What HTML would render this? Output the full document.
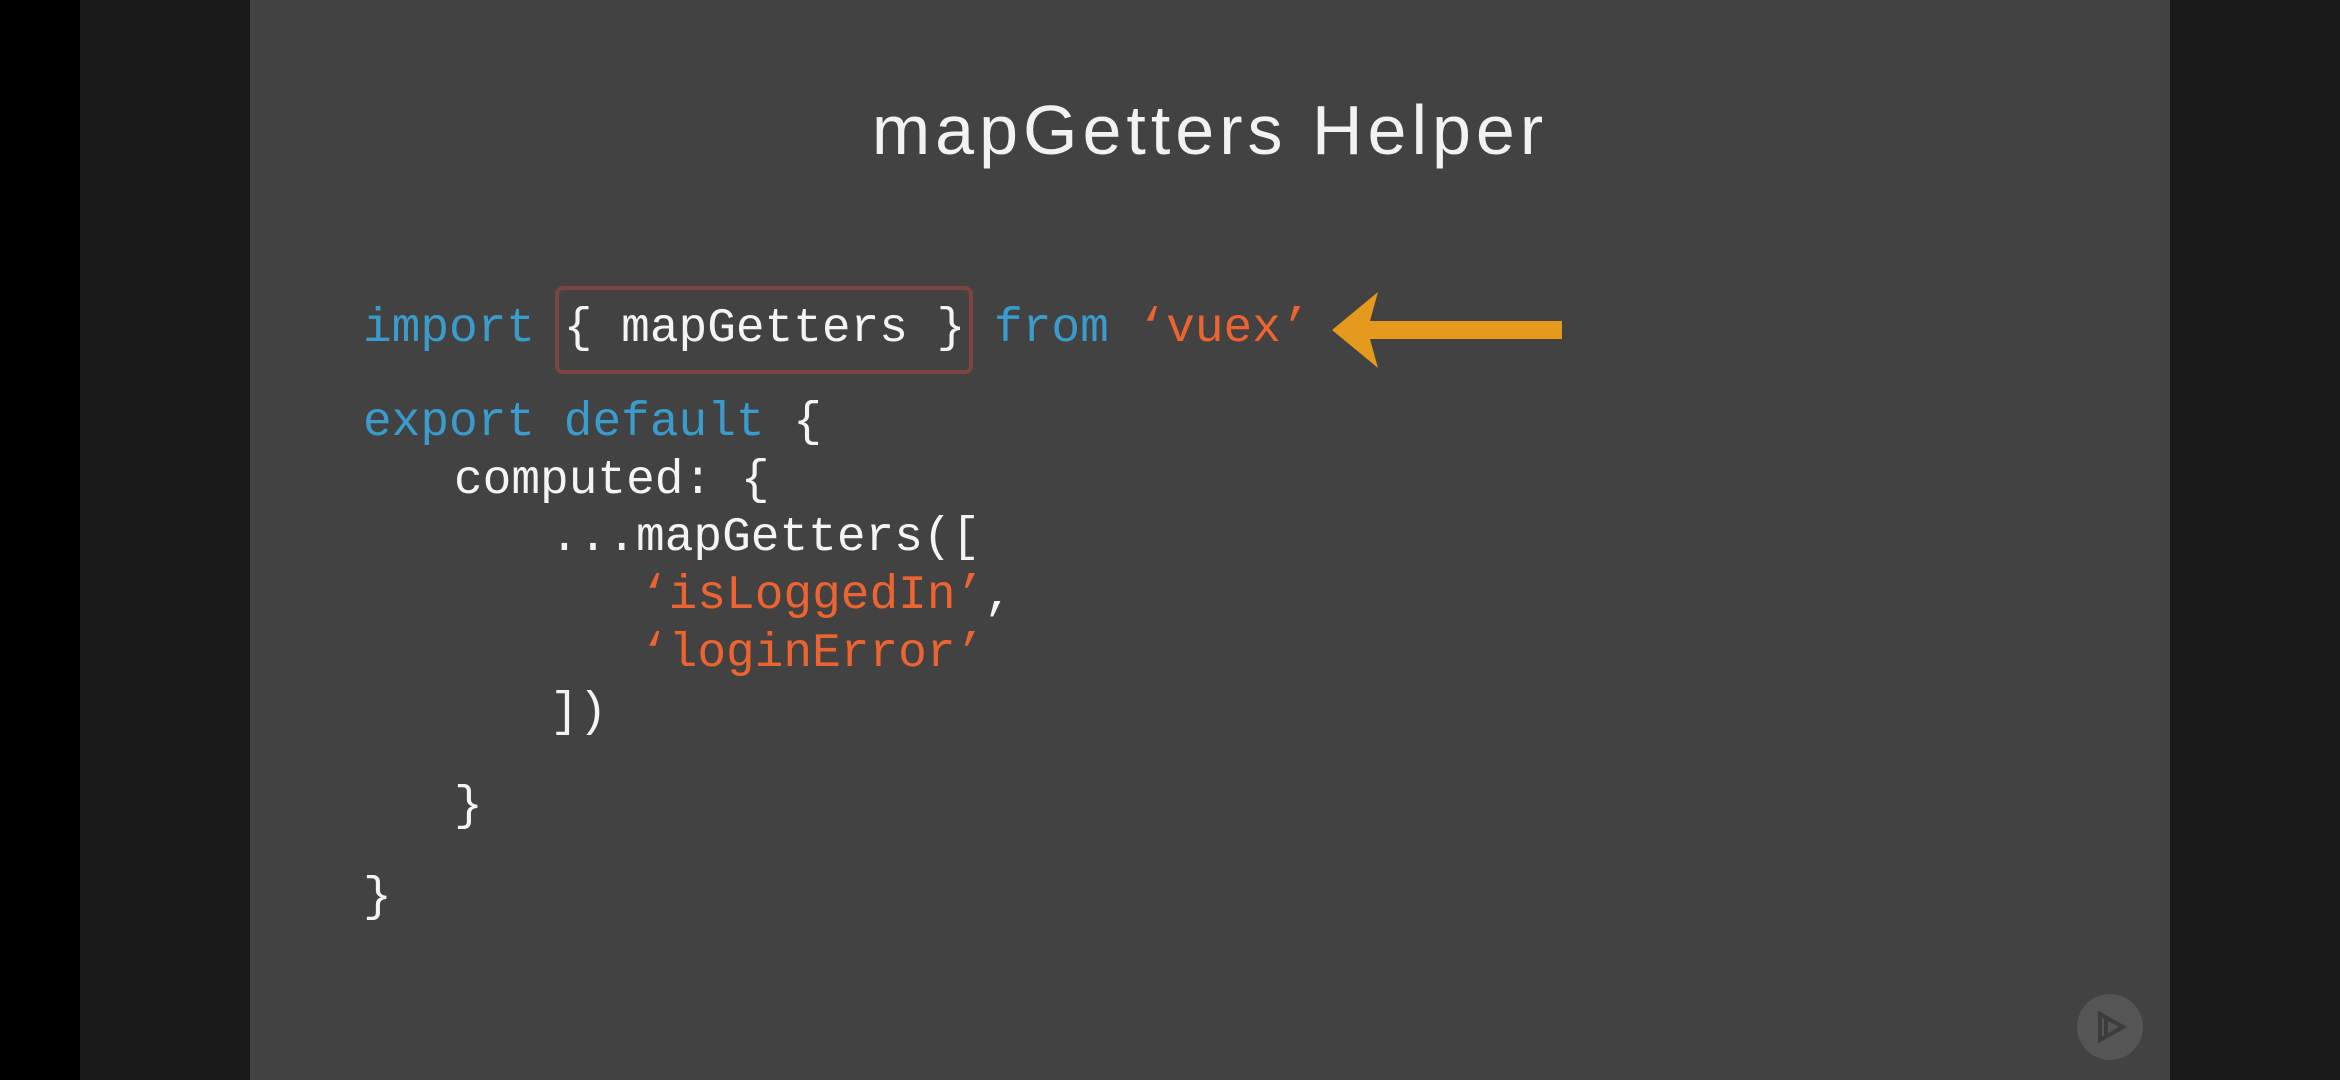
<!DOCTYPE html>
<html><head><meta charset="utf-8"><style>
html,body{margin:0;padding:0;width:2340px;height:1080px;overflow:hidden;background:#000;}
.side{position:absolute;top:0;height:1080px;background:#1a1a1a;}
.slide{position:absolute;left:250px;top:0;width:1920px;height:1080px;background:#424242;}
.title{position:absolute;left:0;width:1920px;top:90px;text-align:center;font-family:"Liberation Sans",sans-serif;font-size:70px;letter-spacing:5px;color:#f2f2f2;line-height:80px;}
.l{position:absolute;font-family:"Liberation Mono",monospace;font-size:47.8px;line-height:60px;color:#f4f4f4;white-space:pre;}
.k{color:#3a9ccc}.s{color:#ee6430}
.box{position:absolute;left:305px;top:286px;width:410px;height:80px;border:4px solid #7d4444;border-radius:8px;}
</style></head><body>
<div class="side" style="left:80px;width:170px"></div>
<div class="side" style="left:2170px;width:170px"></div>
<div class="slide">
<div class="title">mapGetters Helper</div>
<div class="box"></div>
<svg style="position:absolute;left:1080px;top:288px" width="240" height="84"><polygon points="2,42 48,4 40,33 232,33 232,51 40,51 48,80" fill="#e59a1e"/></svg>
<svg style="position:absolute;left:1823px;top:990px" width="74" height="74"><circle cx="37" cy="37" r="33" fill="#555"/><polygon points="27,24 50,37 27,50" fill="none" stroke="#3c3c3c" stroke-width="4"/><line x1="33" y1="28" x2="33" y2="46" stroke="#3c3c3c" stroke-width="4"/></svg>
</div>
<div class="l" style="left:363px;top:299px"><span class="k">import</span> { mapGetters } <span class="k">from</span> <span class="s">‘vuex’</span></div>
<div class="l" style="left:363px;top:393px"><span class="k">export</span> <span class="k">default</span> {</div>
<div class="l" style="left:454px;top:451px">computed: {</div>
<div class="l" style="left:550px;top:508px">...mapGetters([</div>
<div class="l" style="left:640px;top:566px"><span class="s">‘isLoggedIn’</span>,</div>
<div class="l" style="left:640px;top:624px"><span class="s">‘loginError’</span></div>
<div class="l" style="left:550px;top:683px">])</div>
<div class="l" style="left:454px;top:777px">}</div>
<div class="l" style="left:363px;top:868px">}</div>
</body></html>
